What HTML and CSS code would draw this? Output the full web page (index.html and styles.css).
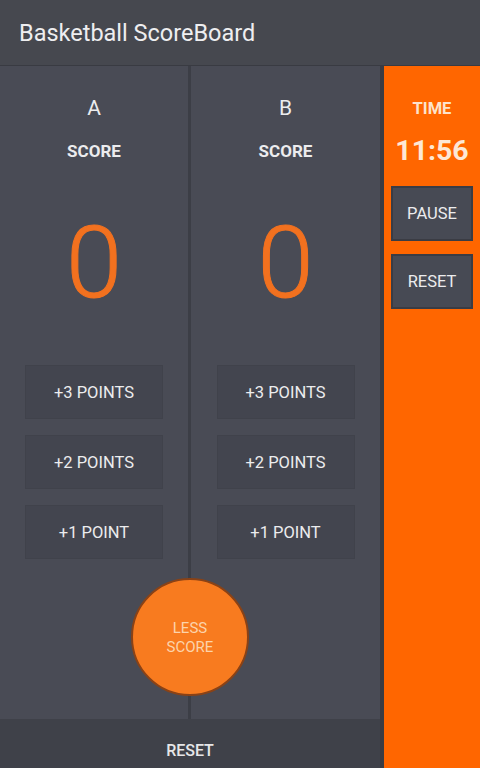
FILE: index.html
```html
<!DOCTYPE html>
<html>
<head>
<meta charset="utf-8">
<link rel="stylesheet" href="styles.css">
</head>
<body>
<div class="app">
  <header class="header">Basketball ScoreBoard</header>
  <div class="main">
    <div class="teams">
      <div class="cols">
        <section class="team team-a">
          <div class="team-name">A</div>
          <div class="score-label">SCORE</div>
          <div class="score">0</div>
          <div class="btns">
            <div class="pt-btn">+3 POINTS</div>
            <div class="pt-btn">+2 POINTS</div>
            <div class="pt-btn">+1 POINT</div>
          </div>
        </section>
        <div class="divider"></div>
        <section class="team team-b">
          <div class="team-name">B</div>
          <div class="score-label">SCORE</div>
          <div class="score">0</div>
          <div class="btns">
            <div class="pt-btn">+3 POINTS</div>
            <div class="pt-btn">+2 POINTS</div>
            <div class="pt-btn">+1 POINT</div>
          </div>
        </section>
        <div class="less-btn">LESS<br>SCORE</div>
      </div>
      <div class="reset-bar">RESET</div>
    </div>
    <aside class="timer">
      <div class="time-label">TIME</div>
      <div class="time">11:56</div>
      <div class="t-btn pause">PAUSE</div>
      <div class="t-btn">RESET</div>
    </aside>
  </div>
</div>
</body>
</html>
```
FILE: styles.css
```css
* { box-sizing: border-box; }
html, body { margin: 0; padding: 0; }
body {
  width: 480px;
  height: 768px;
  overflow: hidden;
  background: #494b55;
  font-family: Roboto, "Liberation Sans", sans-serif;
  color: #ececee;
}
.app {
  display: flex;
  flex-direction: column;
  height: 768px;
}
.header {
  height: 66px;
  flex: none;
  background: #46484f;
  border-bottom: 1px solid #393b42;
  padding-left: 19px;
  font-size: 23.5px;
  line-height: 67px;
  color: #eeeef0;
}
.main {
  flex: 1;
  display: flex;
  min-height: 0;
}
.teams {
  width: 384px;
  flex: none;
  display: flex;
  flex-direction: column;
  border-right: 4px solid #3a3c43;
}
.cols {
  flex: 1;
  display: flex;
  position: relative;
  background: #494b55;
}
.team {
  display: flex;
  flex-direction: column;
  align-items: center;
}
.team-a { width: 188px; }
.team-b { flex: 1; }
.divider {
  width: 3px;
  background: #3c3e46;
}
.team-name {
  margin-top: 30px;
  height: 24px;
  line-height: 24px;
  font-size: 21px;
}
.score-label {
  margin-top: 21px;
  height: 20px;
  line-height: 20px;
  font-size: 17px;
  font-weight: 700;
}
.score {
  margin-top: 52px;
  height: 100px;
  line-height: 100px;
  font-size: 101px;
  font-weight: 300;
  color: #f2711f;
  -webkit-text-stroke: 1px #f2711f;
}
.btns {
  margin-top: 52px;
  display: flex;
  flex-direction: column;
  gap: 16px;
}
.pt-btn {
  width: 138px;
  height: 54px;
  background: #43454f;
  border: 1px solid #40424b;
  display: flex;
  align-items: center;
  justify-content: center;
  font-size: 16.5px;
  font-weight: 400;
  color: #ececee;
}
.less-btn {
  position: absolute;
  left: 131px;
  top: 512px;
  width: 118px;
  height: 118px;
  border-radius: 50%;
  background: #f87b1f;
  border: 2px solid #8a4216;
  display: flex;
  align-items: center;
  justify-content: center;
  text-align: center;
  padding-top: 2px;
  font-size: 15px;
  line-height: 19px;
  color: #fcd3ab;
}
.reset-bar {
  height: 49px;
  flex: none;
  background: #3f4149;
  padding-top: 22px;
  text-align: center;
  line-height: 20px;
  font-size: 16px;
  font-weight: 500;
  color: #e6e6e8;
}
.timer {
  flex: 1;
  background: #ff6600;
  display: flex;
  flex-direction: column;
  align-items: center;
}
.time-label {
  margin-top: 33px;
  height: 20px;
  line-height: 20px;
  font-size: 16.5px;
  font-weight: 700;
  color: #fde3cc;
}
.time {
  margin-top: 15px;
  height: 34px;
  line-height: 34px;
  font-size: 28.5px;
  font-weight: 700;
  color: #fde8d6;
}
.t-btn {
  width: 82px;
  height: 55px;
  background: #474a54;
  border: 2px solid #3a3c44;
  display: flex;
  align-items: center;
  justify-content: center;
  font-size: 16.5px;
  font-weight: 400;
  color: #ececee;
}
.pause { margin-top: 18px; margin-bottom: 13px; }
```
